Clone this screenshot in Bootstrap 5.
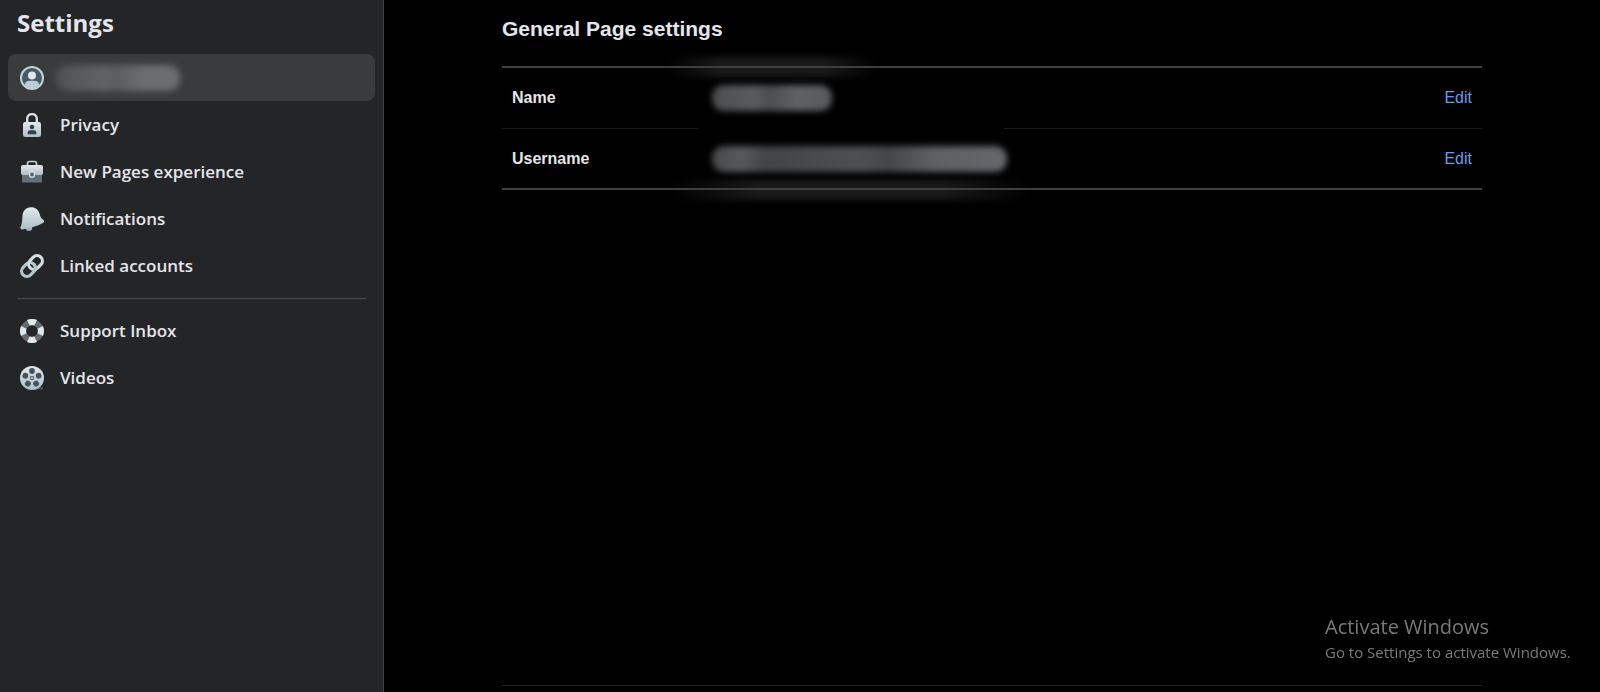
<!DOCTYPE html>
<html lang="en">
<head>
<meta charset="utf-8">
<meta name="viewport" content="width=device-width, initial-scale=1">
<title>Settings</title>
<link href="https://cdn.jsdelivr.net/npm/bootstrap@5.3.0/dist/css/bootstrap.min.css" rel="stylesheet">
<style>
  body { background: #000; color: #e4e6eb; }
  .side-panel {
    width: 384px; background: #242527; border-right: 1px solid #3e4042;
    font-family: "Open Sans", "Noto Sans", sans-serif; padding: 7px 8px;
  }
  .side-title { font-size: 24px; line-height: 32px; font-weight: 700; margin: 0 0 15px; padding-left: 9px; }
  .side-panel .nav-link {
    height: 47px; padding: 0 12px; gap: 16px; border-radius: 8px;
    font-size: 17px; line-height: 24px; font-weight: 600; color: #e4e6eb;
  }
  .side-panel .nav-link.active { background: #3a3b3c; gap: 12px; }
  .side-panel .nav-link svg { width: 24px; height: 24px; flex: none; }
  .side-rule { margin: 9px 9px 8px; border-top: 1px solid #4a4c4e; opacity: 1; }
  .main-area { font-family: "Liberation Sans", Arial, sans-serif; padding: 0 16px 6px; }
  .content-col { max-width: 980px; }
  .page-title { font-size: 21px; line-height: 24px; font-weight: 700; margin: 17px 0 25px; }
  .info-table { --bs-table-bg: transparent; --bs-table-color: #e4e6eb; border-top: 2px solid #3e3f40; border-bottom: 2px solid #3e3f40; font-size: 16px; line-height: 24px; margin: 0; }
  .info-table th, .info-table td { height: 61px; padding: 1px 10px 0; vertical-align: middle; border: 0; }
  .info-table tr + tr > * { border-top: 1px solid #1b1b1c; }
  .col-label { width: 200px; }
  .col-action { width: 80px; }
  .info-table a { color: #6a9ae8; text-decoration: none; }
  .redacted { display: block; height: 26px; border-radius: 12px; filter: blur(3px); }
  .redacted-side { width: 124px; background: linear-gradient(90deg, #505153, #626365 40%, #5b5c5e 48%, #6c6d6f 70%, #6c6d6f); }
  .redacted-name { width: 120px; background: linear-gradient(90deg, #4c4d4f, #5a5b5d 35%, #4c4d4f 48%, #606163 70%, #595a5c); }
  .redacted-user { width: 295px; background: linear-gradient(90deg, #48494b, #58595b 10%, #434446 18%, #4e4f51 50%, #454648 60%, #5f6062 75%, #66676a); }
  .smudge { left: 165px; height: 20px; filter: blur(3px); pointer-events: none; background: linear-gradient(90deg, transparent, #1a1a1b 25%, #1a1a1b 75%, transparent); }
  .smudge-top { top: -9px; width: 210px; }
  .smudge-bottom { bottom: -10px; width: 365px; }
  .smudge-mid { top: 58px; left: 196px; width: 306px; height: 8px; background: #000; pointer-events: none; }
  .bottom-rule { border-top: 1px solid #242526; }
  .watermark { right: 32px; bottom: 29px; width: 243px; color: #7a7a7a; font-family: "Open Sans", "Noto Sans", sans-serif; pointer-events: none; }
  .mark-title { font-size: 20px; line-height: 28px; }
  .mark-text { font-size: 15px; line-height: 22px; }
</style>
</head>
<body>
<svg width="0" height="0" class="position-absolute" aria-hidden="true">
  <defs>
    <linearGradient id="steel" x1="0" y1="0" x2="0" y2="1"><stop offset="0" stop-color="#e2e9ed"/><stop offset="1" stop-color="#adbfc9"/></linearGradient>
  </defs>
</svg>
<div class="d-flex min-vh-100">
  <aside class="side-panel flex-shrink-0">
    <h1 class="side-title">Settings</h1>
    <nav class="nav flex-column" aria-label="Settings">
      <a class="nav-link active d-flex align-items-center" href="#" aria-label="Page" aria-current="page">
        <svg viewBox="0 0 24 24"><circle cx="12" cy="12" r="11" fill="#475a66" stroke="#c3d0d8" stroke-width="2"/><circle cx="12" cy="9.4" r="4" fill="#dfe8ed"/><path d="M4.800 18.600c.4-2.800 2.600-3.800 5-3.800h4.400c2.400 0 4.600 1 5 3.800C17.700 21.500 15 23 12 23s-5.700-1.500-7.200-4.400z" fill="#bdccd5"/></svg>
        <span class="redacted redacted-side"></span>
      </a>
      <a class="nav-link d-flex align-items-center" href="#">
        <svg viewBox="0 0 24 24"><path d="M7.200 10V5.800a4.800 4.800 0 0 1 9.600 0V10" fill="none" stroke="#d5dfe5" stroke-width="2.400"/><rect x="3" y="9" width="18" height="15" rx="2.200" fill="url(#steel)"/><circle cx="12" cy="14" r="2.300" fill="#2f414c"/><path d="M7.700 21.300v-1.500c0-1.700 1-2.500 2.400-2.500h3.800c1.400 0 2.400.8 2.400 2.500v1.500z" fill="#2f414c"/></svg>
        Privacy
      </a>
      <a class="nav-link d-flex align-items-center" href="#">
        <svg viewBox="0 0 24 24"><path d="M7.500 6V3.500a2 2 0 0 1 2-2h5a2 2 0 0 1 2 2V6" fill="none" stroke="#c3d0d8" stroke-width="1.700"/><path d="M2 14h20v7.500a1 1 0 0 1-1 1H3a1 1 0 0 1-1-1z" fill="#626e78"/><path d="M3 5h18a2 2 0 0 1 2 2v6a2 2 0 0 1-2 2H3a2 2 0 0 1-2-2V7a2 2 0 0 1 2-2z" fill="url(#steel)"/><rect x="9.700" y="12" width="4.600" height="5" rx="1" fill="#4e5c66" stroke="#d3dee4" stroke-width="1.400"/></svg>
        New Pages experience
      </a>
      <a class="nav-link d-flex align-items-center" href="#">
        <svg viewBox="0 0 24 24"><circle cx="9" cy="20.800" r="3.200" fill="#9db0bb"/><path d="M2.500 8C3 3.500 6.500.2 11 .2c4.500 0 7.500 2.500 8.500 6.300.7 3.200 1.500 4.600 3.700 6.300 1.300 1 1.100 2.500-.2 3.200C17.500 19 9.500 21.500 2.200 22.400.8 22.600-.1 21.300.5 20 2.500 16.300 2.200 12.600 2.500 8z" fill="url(#steel)"/></svg>
        Notifications
      </a>
      <a class="nav-link d-flex align-items-center" href="#">
        <svg viewBox="0 0 24 24"><g fill="none" stroke-width="3.200" transform="rotate(-45 12 12)"><rect x="-.5" y="6.700" width="15" height="10.600" rx="5.300" stroke="#b4c5cf"/><rect x="9.500" y="6.700" width="15" height="10.600" rx="5.300" stroke="#d3dee4"/><path d="M9.200 17.300a5.300 5.300 0 0 0 5.300-5.300" stroke="#b4c5cf"/></g></svg>
        Linked accounts
      </a>
      <hr class="side-rule">
      <a class="nav-link d-flex align-items-center" href="#">
        <svg viewBox="0 0 24 24"><circle cx="12" cy="12" r="8.700" fill="none" stroke="#68696c" stroke-width="6"/><g fill="#dce8ed"><path id="band" d="M7 1.100a12 12 0 0 1 10 0l-2.700 5.400a6 6 0 0 0-4.600 0z"/><use href="#band" transform="rotate(90 12 12)"/><use href="#band" transform="rotate(180 12 12)"/><use href="#band" transform="rotate(270 12 12)"/></g></svg>
        Support Inbox
      </a>
      <a class="nav-link d-flex align-items-center" href="#">
        <svg viewBox="0 0 24 24"><path d="M13 21h10v2.500H13z" fill="#40505a"/><circle cx="12" cy="12" r="12" fill="url(#steel)"/><g fill="#43535e"><circle id="hole" cx="12" cy="5" r="2.900"/><use href="#hole" transform="rotate(72 12 12)"/><use href="#hole" transform="rotate(144 12 12)"/><use href="#hole" transform="rotate(216 12 12)"/><use href="#hole" transform="rotate(288 12 12)"/></g><circle cx="12" cy="12" r="1.700" fill="#d3dee4" stroke="#53636e" stroke-width="1.200"/></svg>
        Videos
      </a>
    </nav>
  </aside>
  <main class="main-area flex-grow-1 d-flex flex-column">
    <div class="content-col w-100 mx-auto flex-grow-1 d-flex flex-column">
      <h2 class="page-title">General Page settings</h2>
      <div class="position-relative">
        <div class="smudge smudge-top position-absolute"></div>
        <div class="smudge smudge-bottom position-absolute"></div>
        <table class="table info-table position-relative">
          <tbody>
            <tr>
              <th scope="row" class="col-label">Name</th>
              <td><span class="redacted redacted-name"></span></td>
              <td class="col-action text-end"><a href="#" aria-label="Edit name">Edit</a></td>
            </tr>
            <tr>
              <th scope="row" class="col-label">Username</th>
              <td><span class="redacted redacted-user"></span></td>
              <td class="col-action text-end"><a href="#" aria-label="Edit username">Edit</a></td>
            </tr>
          </tbody>
        </table>
        <div class="smudge-mid position-absolute"></div>
      </div>
      <footer class="bottom-rule mt-auto"></footer>
    </div>
  </main>
</div>
<div class="watermark position-fixed">
  <div class="mark-title">Activate Windows</div>
  <div class="mark-text text-nowrap">Go to Settings to activate Windows.</div>
</div>
<script src="https://cdn.jsdelivr.net/npm/bootstrap@5.3.0/dist/js/bootstrap.bundle.min.js"></script>
</body>
</html>
